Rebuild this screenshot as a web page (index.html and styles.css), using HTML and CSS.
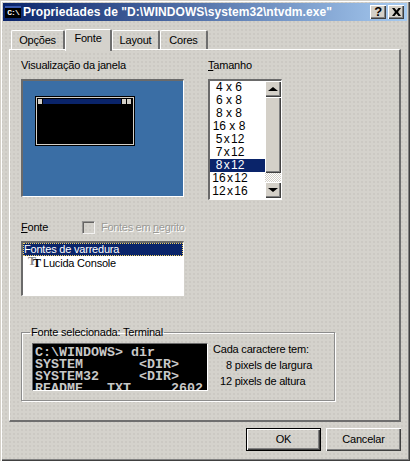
FILE: index.html
```html
<!DOCTYPE html>
<html lang="pt">
<head>
<meta charset="utf-8">
<title>Propriedades</title>
<link rel="stylesheet" href="styles.css">
</head>
<body>
<div class="window">
  <div class="titlebar">
    <span class="app-icon"><span class="app-icon-text">C:\</span></span>
    <span class="title-text">Propriedades de "D:\WINDOWS\system32\ntvdm.exe"</span>
    <span class="cap-btn cap-help">?</span>
    <span class="cap-btn cap-close">
      <svg width="9" height="8" viewBox="0 0 9 8"><path d="M0 0h2.500L4.500 2.500 6.500 0H9L6 4l3 4H6.500L4.500 5.500 2.500 8H0l3-4z" fill="#000"/></svg>
    </span>
  </div>
  <div class="tabs">
    <span class="tab tab-first">Opções</span>
    <span class="tab tab-active">Fonte</span>
    <span class="tab">Layout</span>
    <span class="tab">Cores</span>
  </div>
  <div class="panel">
    <div class="top-row">
      <div class="preview-col">
        <div class="label">Visualização da janela</div>
        <div class="desktop">
          <div class="console">
            <div class="console-bar">
              <span class="console-sq"></span>
              <span class="console-title"></span>
              <span class="console-sq"></span>
              <span class="console-sq"></span>
            </div>
          </div>
        </div>
      </div>
      <div class="size-col">
        <div class="label"><u>T</u>amanho</div>
        <div class="sizebox">
          <div class="size-list">
            <div class="size-item">4 x 6</div>
            <div class="size-item">6 x 8</div>
            <div class="size-item">8 x 8</div>
            <div class="size-item">16 x 8</div>
            <div class="size-item size-tight">5 x 12</div>
            <div class="size-item size-tight">7 x 12</div>
            <div class="size-item size-tight size-selected">8 x 12</div>
            <div class="size-item size-tight">16 x 12</div>
            <div class="size-item size-tight">12 x 16</div>
          </div>
          <div class="scrollbar">
            <span class="sb-btn"><span class="arrow-up"></span></span>
            <span class="sb-thumb"></span>
            <span class="sb-track"></span>
            <span class="sb-btn"><span class="arrow-down"></span></span>
          </div>
        </div>
      </div>
    </div>
    <div class="font-head">
      <span class="label font-label"><u>F</u>onte</span>
      <span class="checkbox"></span>
      <span class="disabled">Fontes em <u>n</u>egrito</span>
    </div>
    <div class="fontbox">
      <div class="font-item font-selected">Fontes de varredura</div>
      <div class="font-item font-sub">
        <span class="tt-icon"><span class="tt-back">T</span><span class="tt-front">T</span></span>Lucida Console
      </div>
    </div>
    <fieldset class="group">
      <legend class="legend">Fonte selecionada: Terminal</legend>
      <div class="group-row">
        <div class="terminal">
          <div class="term-line">C:\WINDOWS&gt; dir</div>
          <div class="term-line">SYSTEM       &lt;DIR&gt;</div>
          <div class="term-line">SYSTEM32     &lt;DIR&gt;</div>
          <div class="term-line">README   TXT     2602</div>
        </div>
        <div class="metrics">
          <div class="metric">Cada caractere tem:</div>
          <div class="metric metric-w">8 pixels de largura</div>
          <div class="metric metric-h">12 pixels de altura</div>
        </div>
      </div>
    </fieldset>
  </div>
  <div class="buttons">
    <span class="btn btn-default"><span class="btn-in">OK</span></span>
    <span class="btn"><span class="btn-in">Cancelar</span></span>
  </div>
</div>
</body>
</html>
```
FILE: styles.css
```css
* { box-sizing: border-box; }
html, body { margin: 0; padding: 0; }
body {
  width: 410px;
  height: 461px;
  overflow: hidden;
  background: #d4d0c8;
  font: 11px/13px "Liberation Sans", Arial, sans-serif;
  letter-spacing: -0.2px;
  color: #000;
}
.window {
  width: 410px;
  height: 461px;
  padding: 3px 3px 0;
  background-color: #d4d2cc;
  background-image: radial-gradient(circle, #c6c4be 0.6px, transparent 0.9px);
  background-size: 4px 4px;
  box-shadow: inset 1px 1px 0 #d4d0c8, inset 2px 2px 0 #fff, inset -1px -1px 0 #404040, inset -2px -2px 0 #808080;
}

.titlebar {
  height: 18px;
  display: flex;
  align-items: center;
  padding: 0 3px 0 2px;
  background: linear-gradient(90deg, #0a246a, #a6caf0);
}
.app-icon {
  width: 16px;
  height: 12px;
  margin-right: 2px;
  background: #000;
  border-top: 2px solid #3a5ab0;
  display: flex;
  align-items: center;
  justify-content: center;
  overflow: hidden;
}
.app-icon-text {
  font: bold 8px/8px "Liberation Mono", monospace;
  color: #fff;
  letter-spacing: -1px;
}
.title-text {
  flex: 1;
  color: #fff;
  font: bold 12px/16px "Liberation Sans", Arial, sans-serif;
  letter-spacing: 0.06px;
  white-space: nowrap;
  overflow: hidden;
}
.cap-btn {
  width: 16px;
  height: 14px;
  background: #d4d0c8;
  box-shadow: inset 1px 1px 0 #fff, inset -1px -1px 0 #404040, inset -2px -2px 0 #808080;
  display: flex;
  align-items: center;
  justify-content: center;
  font: bold 13px/14px "Liberation Sans", Arial, sans-serif;
}
.cap-close { margin-left: 2px; }

.tabs {
  height: 29px;
  display: flex;
  align-items: flex-end;
  padding-left: 6px;
  padding-top: 8px;
  position: relative;
  z-index: 1;
}
.tab {
  height: 19px;
  padding: 3px 0 0;
  width: 48px;
  text-align: center;
  border-top: 1px solid #fff;
  border-left: 1px solid #fff;
  border-right: 2px solid #6e6e6e;
  border-radius: 2px 2px 0 0;
  margin-bottom: 1px;
}
.tab-first { width: 54px; margin-left: 2px; }
.tab-active {
  width: 47px;
  height: 22px;
  padding-top: 2px;
  margin-bottom: -1px;
  background-color: #d4d2cc;
}
.panel {
  width: 392px;
  height: 373px;
  margin-left: 6px;
  margin-top: -1px;
  padding: 9px 11px 0;
  border-top: 1px solid #fff;
  border-left: 1px solid #fff;
  border-right: 2px solid #6e6e6e;
  border-bottom: 2px solid #6e6e6e;
}
.label { line-height: 13px; white-space: nowrap; }
.top-row { display: flex; }
.preview-col { width: 187px; }
.desktop {
  width: 163px;
  height: 118px;
  margin-top: 7px;
  background: #3a6ea5;
  padding: 15px 0 0 12px;
  border-top: 2px solid #6a6a6a;
  border-left: 2px solid #6a6a6a;
  border-right: 1px solid #fff;
  border-bottom: 1px solid #fff;
}
.console {
  width: 100px;
  height: 50px;
  background: #000;
  border: 1px solid #000;
  box-shadow: inset 0 0 0 1px #d4d0c8;
  padding: 2px;
}
.console-bar { display: flex; height: 5px; }
.console-sq { width: 4px; height: 5px; background: #d4d0c8; margin-right: 1px; }
.console-title { width: 82px; background: #0a246a; margin-right: 1px; }
.size-col { width: 74px; }
.sizebox {
  width: 74px;
  height: 121px;
  margin-top: 7px;
  display: flex;
  background: #fff;
  border-top: 2px solid #6a6a6a;
  border-left: 2px solid #6a6a6a;
  border-right: 1px solid #fff;
  border-bottom: 1px solid #fff;
  overflow: hidden;
}
.size-list { width: 55px; }
.size-item { height: 13px; line-height: 13px; padding-right: 17px; font-size: 12px; letter-spacing: 0; white-space: nowrap; text-align: center; }
.size-tight { word-spacing: -2px; padding-right: 15px; }
.size-selected { background: #0a246a; color: #fff; }
.scrollbar { width: 16px; height: 117px; display: flex; flex-direction: column; }
.sb-btn {
  height: 16px;
  flex: none;
  background: #d4d0c8;
  box-shadow: inset 1px 1px 0 #fff, inset -1px -1px 0 #404040, inset -2px -2px 0 #808080;
  display: flex;
  align-items: center;
  justify-content: center;
}
.arrow-up { border-style: solid; border-color: transparent; border-width: 0 5px 4px; border-bottom-color: #000; }
.arrow-down { border-style: solid; border-color: transparent; border-width: 4px 5px 0; border-top-color: #000; }
.sb-thumb {
  height: 76px;
  flex: none;
  background: #d4d0c8;
  box-shadow: inset 1px 1px 0 #fff, inset -1px -1px 0 #404040, inset -2px -2px 0 #808080;
}
.sb-track {
  height: 9px;
  flex: none;
  background: repeating-conic-gradient(#fff 0 25%, #d4d0c8 0 50%) 0 0 / 2px 2px;
}
.font-head { display: flex; align-items: center; height: 14px; margin-top: 20px; }
.font-label { width: 61px; }
.checkbox {
  width: 13px;
  height: 13px;
  margin-right: 6px;
  border-top: 1px solid #808080;
  border-left: 1px solid #808080;
  border-right: 1px solid #fff;
  border-bottom: 1px solid #fff;
  box-shadow: inset 1px 1px 0 #404040;
  opacity: .75;
}
.disabled { color: #9a9a96; text-shadow: 1px 1px 0 #fff; letter-spacing: -0.3px; }
.fontbox {
  width: 163px;
  height: 55px;
  margin-top: 7px;
  background: #fff;
  border-top: 2px solid #6a6a6a;
  border-left: 2px solid #6a6a6a;
  border-right: 1px solid #fff;
  border-bottom: 1px solid #fff;
}
.font-item { height: 13px; line-height: 13px; white-space: nowrap; }
.font-selected { background: #0a246a; color: #fff; outline: 1px dotted #f0d060; outline-offset: -1px; padding-left: 1px; }
.font-sub { display: flex; align-items: center; padding-left: 4px; height: 14px; }
.tt-icon { width: 16px; height: 13px; position: relative; flex: none; }
.tt-back { position: absolute; left: 1px; top: -1px; color: #8a8a8a; font: bold 12px/11px "Liberation Serif", serif; }
.tt-front { position: absolute; left: 6px; top: 0; color: #000; font: bold 12px/13px "Liberation Serif", serif; }
.group {
  width: 314px;
  height: 75px;
  margin: 30px 0 0;
  padding: 4px 0 0 10px;
  border: 1px solid #8c8c8c;
  box-shadow: inset 1px 1px 0 #fff, 1px 1px 0 #fff;
}
.legend { padding: 0 1px; margin-left: -2px; line-height: 13px; }
.group-row { display: flex; }
.terminal {
  width: 176px;
  height: 48px;
  background: #000;
  color: #c8c8c8;
  font: bold 13.33px/12px "Liberation Mono", monospace;
  letter-spacing: 0;
  overflow: hidden;
  padding: 3px 0 0 2px;
  border-top: 1px solid #6a6a6a;
  border-left: 1px solid #6a6a6a;
  border-right: 1px solid #fff;
  border-bottom: 1px solid #fff;
}
.term-line { height: 12px; white-space: pre; }
.metrics { margin-top: -2px; padding: 0 0 0 5px; }
.metric { height: 16px; line-height: 16px; white-space: nowrap; }
.metric-w { padding-left: 13px; }
.metric-h { padding-left: 7px; }
.buttons { display: flex; justify-content: flex-end; gap: 5px; margin-top: 6px; padding-right: 6px; }
.btn {
  width: 75px;
  height: 23px;
  display: flex;
  box-shadow: inset 1px 1px 0 #fff, inset -1px -1px 0 #404040, inset -2px -2px 0 #808080;
}
.btn-default { box-shadow: inset 0 0 0 1px #000, inset 2px 2px 0 #fff, inset -2px -2px 0 #404040, inset -3px -3px 0 #808080; }
.btn-in { flex: 1; text-align: center; line-height: 23px; }
```
